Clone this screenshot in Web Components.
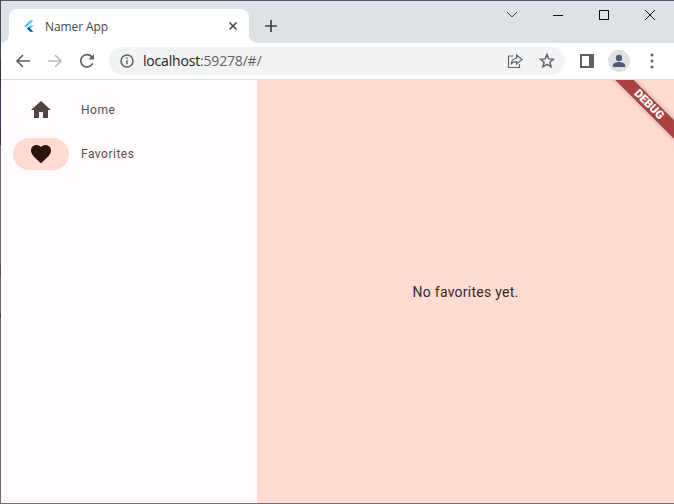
<!DOCTYPE html>
<html>
<head>
<meta charset="utf-8">
<title>Namer App</title>
<style>
    html, body { margin: 0; padding: 0; height: 100%; overflow: hidden; background: #fff; }
</style>
</head>
<body>
<browser-window>
    <browser-tabstrip slot="tabs" title-text="Namer App"></browser-tabstrip>
    <browser-toolbar slot="toolbar" host-text="localhost" rest-text=":59278/#/"></browser-toolbar>
    <namer-app slot="page"></namer-app>
</browser-window>

<script>
class BrowserWindow extends HTMLElement {
    constructor() {
        super();
        this.attachShadow({ mode: 'open' });
        this.shadowRoot.innerHTML = `
            <style>
                :host {
                    display: flex;
                    flex-direction: column;
                    box-sizing: border-box;
                    width: 674px;
                    height: 504px;
                    padding-left: 1px;
                    border-top: 1px solid #4b5a63;
                    border-bottom: 1px solid #6f6f6f;
                    overflow: hidden;
                    /* the left edge is the desktop showing through */
                    background: linear-gradient(to bottom,
                        #3d4a52 0, #3d4a52 60px,
                        #34373a 60px, #34373a 88px,
                        #3e3c5c 88px, #3e3c5c 130px,
                        #34373a 130px, #34373a 144px,
                        #6e6e6e 144px, #6e6e6e 262px,
                        #55565a 262px, #55565a 276px,
                        #6e6e6e 276px, #6e6e6e 312px,
                        #46474a 312px, #46474a 317px,
                        #6e6e6e 317px);
                }
                .page { flex: 1; min-height: 0; display: flex; }
                ::slotted(namer-app) { flex: 1; }
            </style>
            <slot name="tabs"></slot>
            <slot name="toolbar"></slot>
            <div class="page"><slot name="page"></slot></div>
        `;
    }
}

class BrowserTabstrip extends HTMLElement {
    constructor() {
        super();
        this.attachShadow({ mode: 'open' });
        this.shadowRoot.innerHTML = `
            <style>
                :host {
                    display: flex;
                    height: 42px;
                    background: #dee1e6;
                    font-family: "Open Sans", "Liberation Sans", sans-serif;
                }
                .tab {
                    position: relative;
                    box-sizing: border-box;
                    width: 240px;
                    margin: 8px 0 0 8px;
                    padding: 0 5px 0 15px;
                    display: flex;
                    align-items: center;
                    background: #fff;
                    border-radius: 8px 8px 0 0;
                }
                .tab::before, .tab::after {
                    content: '';
                    position: absolute;
                    bottom: 0;
                    width: 8px;
                    height: 8px;
                    background: radial-gradient(circle at 0 0, #dee1e6 7.5px, #fff 8px);
                }
                .tab::before { left: -8px; }
                .tab::after { right: -8px; background: radial-gradient(circle at 100% 0, #dee1e6 7.5px, #fff 8px); }
                .logo { width: 16px; height: 16px; flex: none; }
                .title {
                    flex: 1;
                    margin-left: 4px;
                    padding-left: 1px;
                    font-size: 12px;
                    color: #45474a;
                    letter-spacing: -0.1px;
                }
                .close { width: 16px; height: 16px; margin-right: 3px; flex: none; }
                .plus { width: 16px; height: 16px; margin: 17px 0 0 14px; flex: none; }
                .spacer { flex: 1; }
                .win { display: flex; align-self: flex-start; margin-right: 1px; }
                .win button {
                    all: unset;
                    width: 46px;
                    height: 28px;
                    display: flex;
                    align-items: center;
                    justify-content: center;
                }
                .win svg { display: block; }
            </style>
            <div class="tab">
                <svg class="logo" viewBox="0 0 16 16">
                    <g transform="translate(-3.3 0)">
                        <path d="M9.300 2.200 3.600 7.900l1.700 1.800 7.500-7.500z" fill="#54c5f8"/>
                        <path d="M9.300 7.500 6.300 10.500l1.700 1.800 4.800-4.800z" fill="#54c5f8"/>
                        <path d="M6.300 10.500 8 12.200l1.300 1.600h3.500L9.700 10.700 8 9z" fill="#01579b"/>
                    </g>
                </svg>
                <span class="title"></span>
                <svg class="close" viewBox="0 0 16 16"><path d="M4.500 4.500l7 7M11.500 4.500l-7 7" stroke="#45484c" stroke-width="1.600" fill="none"/></svg>
            </div>
            <svg class="plus" viewBox="0 0 16 16"><path d="M8 2v12M2 8h12" stroke="#3c4043" stroke-width="1.700" fill="none"/></svg>
            <div class="spacer"></div>
            <div class="win">
                <button aria-label="Tab search"><svg width="12" height="8" viewBox="0 0 12 8"><path d="M1 1l5 5 5-5" stroke="#3c4043" fill="none"/></svg></button>
                <button aria-label="Minimize"><svg width="10" height="10" viewBox="0 0 10 10"><path d="M0 5.500h10" stroke="#111" fill="none"/></svg></button>
                <button aria-label="Maximize"><svg width="10" height="10" viewBox="0 0 10 10"><rect x=".5" y=".5" width="9" height="9" stroke="#111" fill="none"/></svg></button>
                <button aria-label="Close"><svg width="10" height="10" viewBox="0 0 10 10"><path d="M0 0l10 10M10 0L0 10" stroke="#111" fill="none"/></svg></button>
            </div>
        `;
        this.shadowRoot.querySelector('.title').textContent = this.getAttribute('title-text');
    }
}

class BrowserToolbar extends HTMLElement {
    constructor() {
        super();
        this.attachShadow({ mode: 'open' });
        this.shadowRoot.innerHTML = `
            <style>
                :host {
                    display: flex;
                    align-items: center;
                    box-sizing: border-box;
                    height: 37px;
                    padding: 0 10px 1px 0;
                    background: #fff;
                    border-bottom: 1px solid #dadce0;
                    font-family: "Open Sans", "Liberation Sans", sans-serif;
                }
                svg { display: block; flex: none; }
                .nav { display: flex; gap: 12px; margin-left: 12px; }
                .nav svg { width: 20px; height: 20px; }
                .omnibox {
                    display: flex;
                    align-items: center;
                    box-sizing: border-box;
                    width: 456px;
                    height: 28px;
                    margin-left: 12px;
                    padding: 0 9px 0 10px;
                    background: #f1f3f4;
                    border-radius: 14px;
                    font-size: 14px;
                }
                .url { flex: 1; margin-left: 8px; color: #202124; white-space: nowrap; letter-spacing: -0.18px; }
                .url span { color: #5f6368; }
                .actions { display: flex; gap: 14px; }
                .right { display: flex; align-items: center; margin-left: 15px; }
                .avatar {
                    width: 22px;
                    height: 22px;
                    margin-left: 14px;
                    border-radius: 50%;
                    background: #dee1e6;
                    display: flex;
                    align-items: center;
                    justify-content: center;
                }
                .dots { margin-left: 20px; }
            </style>
            <div class="nav">
                <svg viewBox="0 0 20 20"><path d="M17 10H4.500M10 4l-6 6 6 6" stroke="#5f6368" stroke-width="1.700" fill="none"/></svg>
                <svg viewBox="0 0 20 20"><path d="M3 10h12.500M10 4l6 6-6 6" stroke="#bababa" stroke-width="1.700" fill="none"/></svg>
                <svg viewBox="0 0 20 20"><path d="M15.600 12.400A6.200 6.200 0 1 1 14.600 5.600L16.500 7.500" stroke="#5f6368" stroke-width="1.700" fill="none"/><path d="M17 3v5.600h-5.600z" fill="#5f6368"/></svg>
            </div>
            <div class="omnibox">
                <svg width="16" height="16" viewBox="0 0 16 16"><circle cx="8" cy="8" r="6" stroke="#5f6368" stroke-width="1.500" fill="none"/><path d="M8 7.200v4M8 4.600v1.400" stroke="#5f6368" stroke-width="1.500" fill="none"/></svg>
                <div class="url"></div>
                <div class="actions">
                    <svg width="18" height="18" viewBox="0 0 18 18"><path d="M7 4H2.500v11.500h11V12" stroke="#5f6368" stroke-width="1.100" fill="none"/><path d="M10.500 3l5.500 4.500-5.500 4.500V9.600c-2.600 0-4.300.9-5.400 2.600.3-3.300 2.300-5.500 5.400-5.900z" stroke="#5f6368" stroke-width="1.100" fill="none"/></svg>
                    <svg width="18" height="18" viewBox="0 0 18 18"><path d="M9 2.600l1.800 4.300 4.600.4-3.500 3 1.100 4.500-4-2.400-4 2.400 1.100-4.500-3.500-3 4.600-.4z" stroke="#5f6368" stroke-width="1.500" fill="none"/></svg>
                </div>
            </div>
            <div class="right">
                <svg width="14" height="14" viewBox="0 0 14 14"><path fill-rule="evenodd" d="M0 0h14v14H0zM2 2v10h7V2z" fill="#5f6368"/></svg>
                <div class="avatar">
                    <svg width="14" height="14" viewBox="0 0 14 14"><circle cx="7" cy="4" r="3.200" fill="#4d5b73"/><path d="M.8 13v-1.500C.8 9.200 4 8 7 8s6.200 1.200 6.200 3.500V13z" fill="#4d5b73"/></svg>
                </div>
                <svg class="dots" width="4" height="16" viewBox="0 0 4 16"><circle cx="2" cy="2" r="1.500" fill="#5f6368"/><circle cx="2" cy="8" r="1.500" fill="#5f6368"/><circle cx="2" cy="14" r="1.500" fill="#5f6368"/></svg>
            </div>
        `;
        const url = this.shadowRoot.querySelector('.url');
        url.textContent = this.getAttribute('host-text');
        const rest = document.createElement('span');
        rest.textContent = this.getAttribute('rest-text');
        url.appendChild(rest);
    }
}

class NavItem extends HTMLElement {
    constructor() {
        super();
        this.attachShadow({ mode: 'open' });
        this.shadowRoot.innerHTML = `
            <style>
                :host {
                    display: flex;
                    align-items: center;
                    height: 44px;
                    font-size: 12px;
                    letter-spacing: 0.5px;
                    color: #574d4b;
                    --icon: #534341;
                    --pill: transparent;
                }
                :host([selected]) { --icon: #2c150f; --pill: #ffdbd1; }
                .pill {
                    width: 56px;
                    height: 32px;
                    margin-left: 12px;
                    border-radius: 16px;
                    background: var(--pill);
                    display: flex;
                    align-items: center;
                    justify-content: center;
                    color: var(--icon);
                }
                .label { margin-left: 12px; }
            </style>
            <div class="pill"><slot name="icon"></slot></div>
            <div class="label"><slot></slot></div>
        `;
    }
}

class NamerApp extends HTMLElement {
    constructor() {
        super();
        this.attachShadow({ mode: 'open' });
        this.shadowRoot.innerHTML = `
            <style>
                :host {
                    display: flex;
                    position: relative;
                    overflow: hidden;
                    font-family: Roboto, "Liberation Sans", sans-serif;
                }
                .rail {
                    box-sizing: border-box;
                    width: 256px;
                    padding-top: 8px;
                    background: #fffbff;
                }
                .content {
                    flex: 1;
                    display: flex;
                    align-items: center;
                    justify-content: center;
                    background: #ffdbd1;
                    color: #332b2a;
                    font-size: 14px;
                    letter-spacing: 0.25px;
                }
                svg { display: block; fill: currentColor; }
                .banner {
                    position: absolute;
                    top: 18px;
                    left: 597.5px;
                    width: 100px;
                    height: 13px;
                    transform: rotate(45deg);
                    background: #a94343;
                    box-shadow: 0 0 5px rgba(0, 0, 0, 0.28);
                    color: #fff;
                    font: 900 11.5px/13px Roboto, "Liberation Sans", sans-serif;
                    text-align: center;
                }
            </style>
            <nav class="rail">
                <nav-item>
                    <svg slot="icon" width="24" height="24" viewBox="0 0 24 24"><path d="M10 20v-6h4v6h5v-8h3L12 3 2 12h3v8z"/></svg>
                    Home
                </nav-item>
                <nav-item selected>
                    <svg slot="icon" width="24" height="24" viewBox="0 0 24 24"><path d="M12 21.350l-1.450-1.320C5.400 15.360 2 12.280 2 8.500 2 5.420 4.420 3 7.500 3c1.740 0 3.410.81 4.500 2.090C13.090 3.810 14.760 3 16.500 3 19.580 3 22 5.420 22 8.500c0 3.780-3.400 6.860-8.550 11.540L12 21.350z"/></svg>
                    Favorites
                </nav-item>
            </nav>
            <main class="content">No favorites yet.</main>
            <div class="banner">DEBUG</div>
        `;
    }
}

customElements.define('browser-window', BrowserWindow);
customElements.define('browser-tabstrip', BrowserTabstrip);
customElements.define('browser-toolbar', BrowserToolbar);
customElements.define('nav-item', NavItem);
customElements.define('namer-app', NamerApp);
</script>
</body>
</html>
